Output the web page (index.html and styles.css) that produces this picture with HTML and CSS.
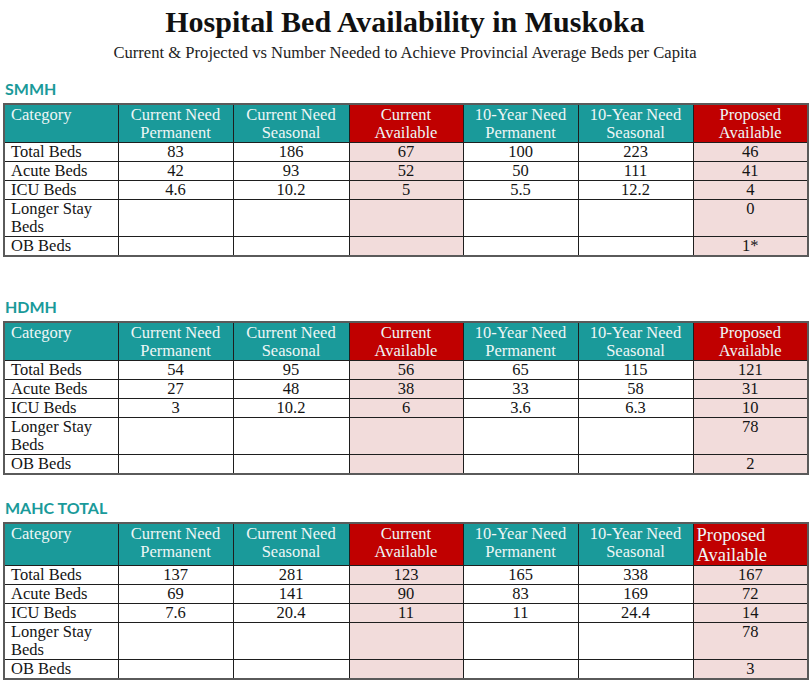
FILE: index.html
```html
<!DOCTYPE html>
<html>
<head>
<meta charset="utf-8">
<link rel="stylesheet" href="styles.css">
</head>
<body>
<h1 class="title">Hospital Bed Availability in Muskoka</h1>
<p class="subtitle">Current &amp; Projected vs Number Needed to Achieve Provincial Average Beds per Capita</p>

<section class="block block-first">
<h2 class="label">SMMH</h2>
<table class="beds">
<colgroup><col class="c1"><col class="c2"><col class="c3"><col class="c4"><col class="c5"><col class="c6"><col class="c7"></colgroup>
<thead><tr>
<th class="cat">Category</th><th class="teal">Current Need<br>Permanent</th><th class="teal">Current Need<br>Seasonal</th><th class="red">Current<br>Available</th><th class="teal">10-Year Need<br>Permanent</th><th class="teal">10-Year Need<br>Seasonal</th><th class="red">Proposed<br>Available</th>
</tr></thead>
<tbody>
<tr><td class="name">Total Beds</td><td>83</td><td>186</td><td class="pink">67</td><td>100</td><td>223</td><td class="pink">46</td></tr>
<tr><td class="name">Acute Beds</td><td>42</td><td>93</td><td class="pink">52</td><td>50</td><td>111</td><td class="pink">41</td></tr>
<tr><td class="name">ICU Beds</td><td>4.6</td><td>10.2</td><td class="pink">5</td><td>5.5</td><td>12.2</td><td class="pink">4</td></tr>
<tr class="tall"><td class="name">Longer Stay<br>Beds</td><td></td><td></td><td class="pink"></td><td></td><td></td><td class="pink">0</td></tr>
<tr><td class="name">OB Beds</td><td></td><td></td><td class="pink"></td><td></td><td></td><td class="pink">1*</td></tr>
</tbody>
</table>
</section>

<section class="block block-second">
<h2 class="label">HDMH</h2>
<table class="beds">
<colgroup><col class="c1"><col class="c2"><col class="c3"><col class="c4"><col class="c5"><col class="c6"><col class="c7"></colgroup>
<thead><tr>
<th class="cat">Category</th><th class="teal">Current Need<br>Permanent</th><th class="teal">Current Need<br>Seasonal</th><th class="red">Current<br>Available</th><th class="teal">10-Year Need<br>Permanent</th><th class="teal">10-Year Need<br>Seasonal</th><th class="red">Proposed<br>Available</th>
</tr></thead>
<tbody>
<tr><td class="name">Total Beds</td><td>54</td><td>95</td><td class="pink">56</td><td>65</td><td>115</td><td class="pink">121</td></tr>
<tr><td class="name">Acute Beds</td><td>27</td><td>48</td><td class="pink">38</td><td>33</td><td>58</td><td class="pink">31</td></tr>
<tr><td class="name">ICU Beds</td><td>3</td><td>10.2</td><td class="pink">6</td><td>3.6</td><td>6.3</td><td class="pink">10</td></tr>
<tr class="tall"><td class="name">Longer Stay<br>Beds</td><td></td><td></td><td class="pink"></td><td></td><td></td><td class="pink">78</td></tr>
<tr><td class="name">OB Beds</td><td></td><td></td><td class="pink"></td><td></td><td></td><td class="pink">2</td></tr>
</tbody>
</table>
</section>

<section class="block block-third">
<h2 class="label">MAHC TOTAL</h2>
<table class="beds">
<colgroup><col class="c1"><col class="c2"><col class="c3"><col class="c4"><col class="c5"><col class="c6"><col class="c7"></colgroup>
<thead><tr>
<th class="cat">Category</th><th class="teal">Current Need<br>Permanent</th><th class="teal">Current Need<br>Seasonal</th><th class="red">Current<br>Available</th><th class="teal">10-Year Need<br>Permanent</th><th class="teal">10-Year Need<br>Seasonal</th><th class="red big">Proposed<br>Available</th>
</tr></thead>
<tbody>
<tr><td class="name">Total Beds</td><td>137</td><td>281</td><td class="pink">123</td><td>165</td><td>338</td><td class="pink">167</td></tr>
<tr><td class="name">Acute Beds</td><td>69</td><td>141</td><td class="pink">90</td><td>83</td><td>169</td><td class="pink">72</td></tr>
<tr><td class="name">ICU Beds</td><td>7.6</td><td>20.4</td><td class="pink">11</td><td>11</td><td>24.4</td><td class="pink">14</td></tr>
<tr class="tall"><td class="name">Longer Stay<br>Beds</td><td></td><td></td><td class="pink"></td><td></td><td></td><td class="pink">78</td></tr>
<tr><td class="name">OB Beds</td><td></td><td></td><td class="pink"></td><td></td><td></td><td class="pink">3</td></tr>
</tbody>
</table>
</section>
</body>
</html>
```

FILE: styles.css
```css
html, body {
  background: #ffffff;
}
body {
  margin: 0;
  padding: 0 2px 0 3px;
  font-family: "Liberation Serif", "Times New Roman", serif;
  color: #141414;
}
.title {
  margin: 0;
  padding-top: 5px;
  font-size: 30px;
  line-height: 34px;
  font-weight: bold;
  text-align: center;
  color: #111;
}
.subtitle {
  margin: 4px 0 0 0;
  font-size: 16.6px;
  line-height: 20px;
  text-align: center;
  color: #222;
}
.block-first { margin-top: 16px; }
.block-second { margin-top: 40px; }
.block-third { margin-top: 23px; }
.label {
  margin: 0 0 4px 2px;
  font-family: "Lato", "Open Sans", sans-serif;
  font-weight: bold;
  font-size: 16px;
  line-height: 20px;
  color: #1a9a9a;
}
.beds {
  width: 804px;
  border-collapse: collapse;
  table-layout: fixed;
  border: 2px solid #5a5a5a;
  font-size: 16.5px;
}
.c1 { width: 114px; }
.c2 { width: 115px; }
.c3 { width: 116px; }
.c4 { width: 114px; }
.c5 { width: 115px; }
.c6 { width: 115px; }
.c7 { width: 115px; }
.beds th, .beds td {
  border: 1px solid #1e1e1e;
  padding: 0 4px;
  line-height: 18px;
}
.beds th {
  font-weight: normal;
  color: #eef6f6;
  vertical-align: top;
  text-align: center;
  height: 38px;
  padding-top: 1px;
  box-sizing: border-box;
}
.beds th.cat {
  text-align: left;
  background: #1a9a9a;
  padding-left: 6px;
}
.beds th.teal { background: #1a9a9a; }
.beds th.red { background: #c00000; }
.beds th.big {
  text-align: left;
  font-size: 18.5px;
  line-height: 20px;
  padding-left: 3px;
}
.beds td {
  text-align: center;
  vertical-align: top;
  height: 18px;
}
.beds td.name {
  text-align: left;
  padding-left: 6px;
}
.beds td.pink { background: #f2dcdb; }
.beds tr.tall td { height: 36px; }
```
